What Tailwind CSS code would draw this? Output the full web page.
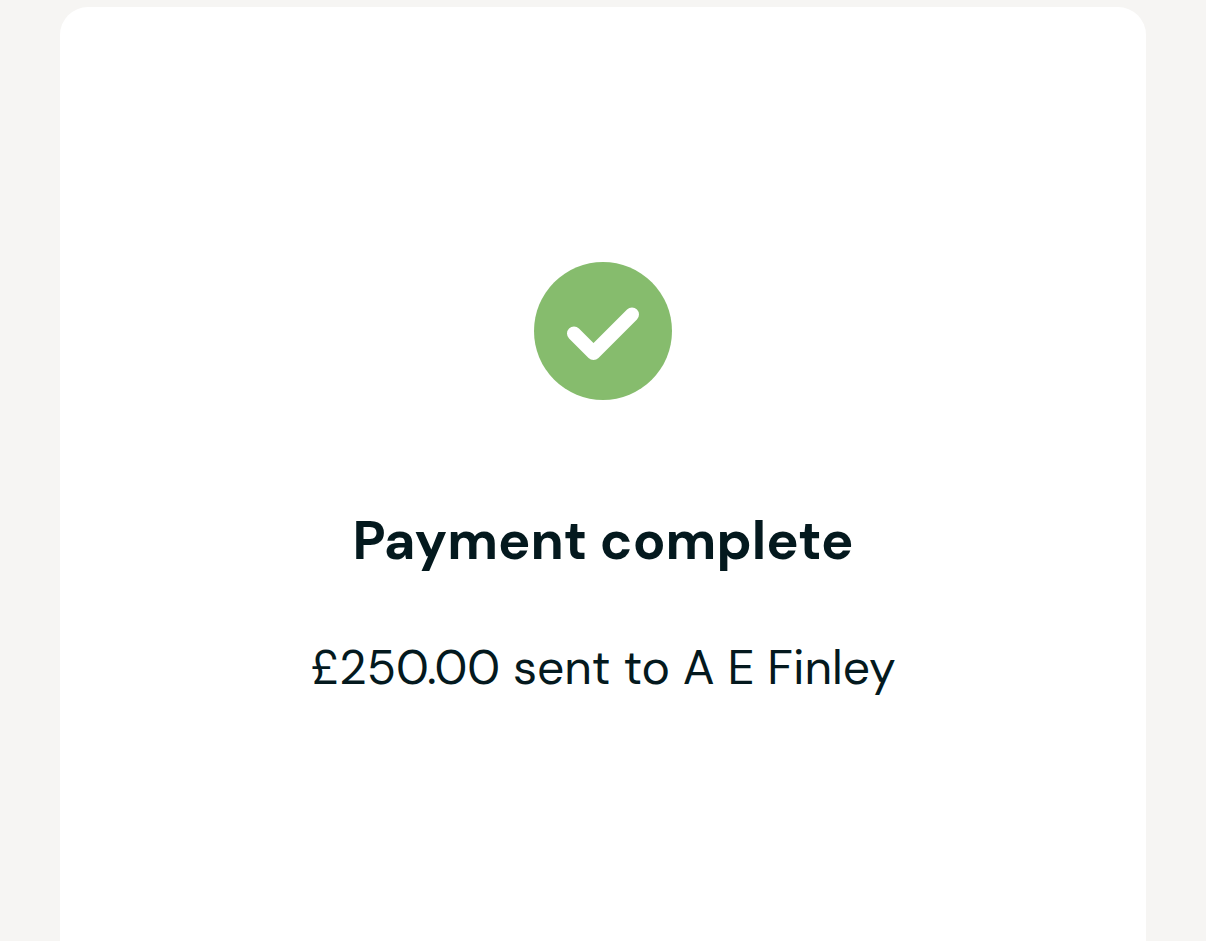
<!DOCTYPE html>
<html lang="en">
<head>
  <meta charset="UTF-8">
  <meta name="viewport" content="width=device-width, initial-scale=1.0">
  <title>Payment complete</title>
  <script src="https://cdn.jsdelivr.net/npm/@tailwindcss/browser@4"></script>
</head>
<body class="bg-[#f6f5f3] text-[#04191e] font-['DM_Sans','Inter',sans-serif]">

  <main class="min-h-screen flex flex-col px-[60px] pt-[7px]">
    <!-- Confirmation card -->
    <section class="flex-1 flex flex-col items-center bg-white rounded-t-[28px] px-6 pt-[255px] pb-16 text-center">
      <svg class="w-[138px] h-[138px]" viewBox="0 0 138 138" fill="none" aria-hidden="true">
        <circle cx="69" cy="69" r="69" fill="#86bc6d" />
        <path d="M40 71.500L59.500 91L98 52.500" stroke="#fff" stroke-width="14" stroke-linecap="round" stroke-linejoin="round" />
      </svg>
      <h1 class="mt-[109px] text-[54px] leading-[64px] font-bold">Payment complete</h1>
      <p class="mt-[63px] text-[48px] leading-[64px]">£250.00 sent to A E Finley</p>
    </section>
  </main>

</body>
</html>
